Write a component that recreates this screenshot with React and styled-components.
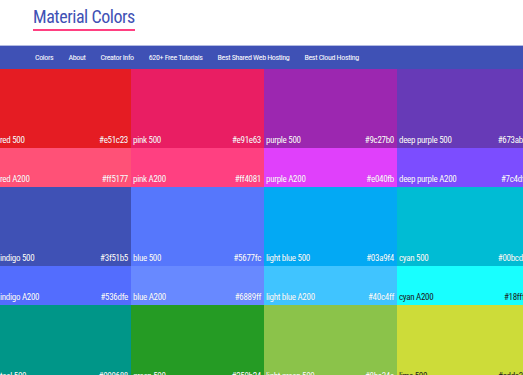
import styled, { createGlobalStyle } from 'styled-components';

const GlobalStyle = createGlobalStyle`
	html, body {
		margin: 0;
		padding: 0;
		background: #ffffff;
		overflow: hidden;
	}
	body {
		font-family: 'Roboto Condensed', 'Liberation Sans Narrow', Roboto, 'Liberation Sans', sans-serif;
	}
`;

const families = [
	['red', '#e51c23', '#ff5177'],
	['pink', '#e91e63', '#ff4081'],
	['purple', '#9c27b0', '#e040fb'],
	['deep purple', '#673ab7', '#7c4dff'],
	['indigo', '#3f51b5', '#536dfe'],
	['blue', '#5677fc', '#6889ff'],
	['light blue', '#03a9f4', '#40c4ff'],
	['cyan', '#00bcd4', '#18ffff', true],
	['teal', '#009688', '#64ffda'],
	['green', '#259b24', '#5af158'],
	['light green', '#8bc34a', '#b2ff59'],
	['lime', '#cddc39', '#eeff41', true],
];

const links = [
	'Colors',
	'About',
	'Creator Info',
	'620+ Free Tutorials',
	'Best Shared Web Hosting',
	'Best Cloud Hosting',
];

const Header = styled.header`
	height: 45px;
	padding: 6px 0 0 33px;
	box-sizing: border-box;
`;

const Title = styled.h1`
	display: inline-block;
	margin: 0;
	font-family: 'Roboto Condensed', 'Liberation Sans Narrow', Roboto, sans-serif;
	font-size: 18px;
	font-weight: 400;
	letter-spacing: -0.45px;
	line-height: 21px;
	color: #3f51b5;
	padding-bottom: 2px;
	border-bottom: 2px solid #ff4081;
`;

const Nav = styled.nav`
	height: 24px;
	background: #3f51b5;
	border-top: 1px solid #b3bbe2;
	box-sizing: border-box;
	display: flex;
	align-items: center;
	gap: 15px;
	padding-left: 35px;

	a {
		color: #ffffff;
		font-size: 8px;
		letter-spacing: -0.35px;
		text-decoration: none;
		white-space: nowrap;
	}
`;

const Grid = styled.main`
	display: grid;
	grid-template-columns: repeat(4, 133px);
	margin-left: -2px;
	width: 532px;
`;

const Family = styled.section`
	display: flex;
	flex-direction: column;
`;

const Cell = styled.div`
	height: ${(p) => (p.$tall ? '79px' : '39px')};
	background: ${(p) => p.$bg};
	color: ${(p) => (p.$dark ? '#1b1b1b' : '#ffffff')};
	display: flex;
	align-items: flex-end;
	justify-content: space-between;
	padding: 0 3px 2px 2px;
	box-sizing: border-box;
	font-size: 9px;
	letter-spacing: -0.3px;
	line-height: 12px;
	text-shadow: ${(p) => (p.$dark ? 'none' : '0 0 1px rgba(0, 0, 0, 0.15)')};
`;

const App = () => {
	return (
		<>
			<GlobalStyle />
			<Header>
				<Title>Material Colors</Title>
			</Header>
			<Nav>
				{links.map((l) => (
					<a key={l} href="#">
						{l}
					</a>
				))}
			</Nav>
			<Grid>
				{families.map(([name, c500, cA200, dark]) => (
					<Family key={name}>
						<Cell $tall $bg={c500} $dark={dark && name === 'lime'}>
							<span>{name} 500</span>
							<span>{c500}</span>
						</Cell>
						<Cell $bg={cA200} $dark={dark}>
							<span>{name} A200</span>
							<span>{cA200}</span>
						</Cell>
					</Family>
				))}
			</Grid>
		</>
	);
};

export default App;
